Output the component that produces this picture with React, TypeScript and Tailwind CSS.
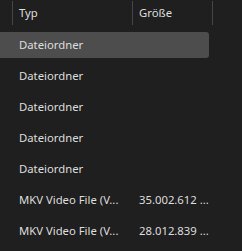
const rows = [
  { type: 'Dateiordner', size: '', selected: true },
  { type: 'Dateiordner', size: '' },
  { type: 'Dateiordner', size: '' },
  { type: 'Dateiordner', size: '' },
  { type: 'Dateiordner', size: '' },
  { type: 'MKV Video File (V...', size: '35.002.612 ...' },
  { type: 'MKV Video File (V...', size: '28.012.839 ...' },
];

export default function App() {
  return (
    <div
      className="w-[242px] h-[251px] overflow-hidden bg-[#1f1f1f] text-[11.3px] text-[#dedede]"
      style={{ fontFamily: '"Segoe UI", "Noto Sans", sans-serif' }}
    >
      {/* Column header */}
      <div className="flex h-[26px] items-center">
        <div className="w-[12px] shrink-0" />
        <div className="w-px h-[24px] bg-[#454545] shrink-0" />
        <div className="w-[119px] shrink-0 pl-[6px] leading-none">Typ</div>
        <div className="w-px h-[24px] bg-[#454545] shrink-0" />
        <div className="w-[79px] shrink-0 pl-[6px] leading-none">Größe</div>
        <div className="w-px h-[24px] bg-[#454545] shrink-0" />
      </div>

      {/* Rows */}
      <div className="mt-[6px] flex flex-col gap-[5px]">
        {rows.map((r, i) => (
          <div
            key={i}
            className={`flex h-[26px] w-[209px] items-center whitespace-nowrap rounded-r-[3px] ${
              r.selected ? 'bg-[#4d4d4d]' : ''
            }`}
          >
            <div className="w-[139px] shrink-0 pl-[19px]">{r.type}</div>
            <div className="shrink-0">{r.size}</div>
          </div>
        ))}
      </div>
    </div>
  );
}
